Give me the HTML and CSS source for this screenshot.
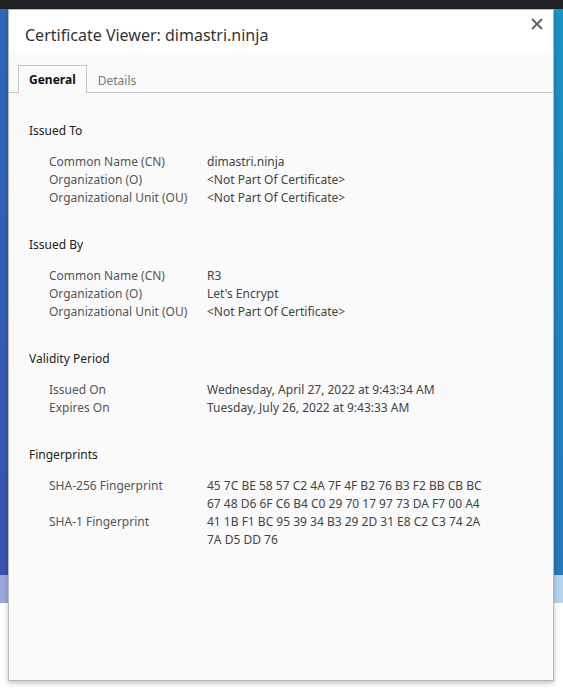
FILE: index.html
```html
<!DOCTYPE html>
<html>
<head>
<meta charset="utf-8">
<link rel="stylesheet" href="styles.css">
</head>
<body>
<div class="topbar"></div>
<div class="backdrop">
  <div class="blue"></div>
  <div class="band"></div>
</div>
<div class="dialog">
  <div class="titlebar">
    <h1 class="title">Certificate Viewer: dimastri.ninja</h1>
    <span class="close">
      <svg width="12" height="12" viewBox="0 0 12 12"><path d="M1 1L11 11M11 1L1 11" stroke="#5f6368" stroke-width="2" fill="none"/></svg>
    </span>
  </div>
  <div class="tabs">
    <div class="tab active">General</div>
    <div class="tab">Details</div>
  </div>
  <div class="content">
    <section class="section">
      <h2 class="heading">Issued To</h2>
      <div class="rows">
        <div class="label">Common Name (CN)</div><div class="value">dimastri.ninja</div>
        <div class="label">Organization (O)</div><div class="value">&lt;Not Part Of Certificate&gt;</div>
        <div class="label">Organizational Unit (OU)</div><div class="value">&lt;Not Part Of Certificate&gt;</div>
      </div>
    </section>
    <section class="section">
      <h2 class="heading">Issued By</h2>
      <div class="rows">
        <div class="label">Common Name (CN)</div><div class="value">R3</div>
        <div class="label">Organization (O)</div><div class="value">Let's Encrypt</div>
        <div class="label">Organizational Unit (OU)</div><div class="value">&lt;Not Part Of Certificate&gt;</div>
      </div>
    </section>
    <section class="section">
      <h2 class="heading">Validity Period</h2>
      <div class="rows">
        <div class="label">Issued On</div><div class="value">Wednesday, April 27, 2022 at 9:43:34 AM</div>
        <div class="label">Expires On</div><div class="value">Tuesday, July 26, 2022 at 9:43:33 AM</div>
      </div>
    </section>
    <section class="section">
      <h2 class="heading">Fingerprints</h2>
      <div class="rows">
        <div class="label">SHA-256 Fingerprint</div><div class="value fp">45 7C BE 58 57 C2 4A 7F 4F B2 76 B3 F2 BB CB BC 67 48 D6 6F C6 B4 C0 29 70 17 97 73 DA F7 00 A4</div>
        <div class="label">SHA-1 Fingerprint</div><div class="value fp">41 1B F1 BC 95 39 34 B3 29 2D 31 E8 C2 C3 74 2A 7A D5 DD 76</div>
      </div>
    </section>
  </div>
</div>
</body>
</html>
```
FILE: styles.css
```css
* { box-sizing: border-box; }
html, body {
  margin: 0;
  padding: 0;
  width: 563px;
  height: 692px;
  overflow: hidden;
  background: #ffffff;
  font-family: "Noto Sans", "Open Sans", sans-serif;
}
.topbar {
  height: 9px;
  background: #202124;
}
.backdrop {
  position: relative;
  height: 600px;
}
.blue {
  height: 566px;
  background:
    linear-gradient(180deg, #2a6ab8 0%, #3a52b0 100%) left top / 20px 100% no-repeat,
    linear-gradient(180deg, #1a92c4 0%, #2478bb 100%) right top / 20px 100% no-repeat,
    #2a70b8;
}
.band {
  height: 28px;
  background: linear-gradient(90deg, #98a6dc 0%, #b6d5ec 100%);
}
.dialog {
  position: absolute;
  left: 8px;
  top: 9px;
  width: 546px;
  height: 672px;
  border: 1px solid #b8b8b8;
  background: #fafafa;
  box-shadow: 0 2px 5px rgba(0,0,0,0.25);
  display: flex;
  flex-direction: column;
}
.titlebar {
  height: 42px;
  background: #ffffff;
  display: flex;
  align-items: center;
  justify-content: space-between;
  padding: 0 10px 0 16px;
}
.title {
  margin: 7px 0 0 0;
  font-size: 16px;
  font-weight: 400;
  color: #333333;
}
.close {
  align-self: flex-start;
  margin-top: 8px;
  display: flex;
}
.tabs {
  display: flex;
  align-items: flex-end;
  height: 41px;
  padding-left: 9px;
  border-bottom: 1px solid #c4c4c4;
}
.tab {
  height: 27px;
  padding: 0 10px;
  font-size: 12px;
  line-height: 27px;
  color: #777777;
  margin-bottom: -1px;
  border: 1px solid transparent;
  border-bottom: none;
}
.tab.active {
  font-weight: 700;
  color: #111111;
  border-color: #c4c4c4;
  background: #fafafa;
  height: 28px;
}
.content {
  padding: 0 0 0 20px;
}
.section {
  padding-top: 29px;
}
.heading {
  margin: 0 0 13px 0;
  font-size: 12px;
  font-weight: 400;
  line-height: 18px;
  color: #222222;
}
.rows {
  display: grid;
  grid-template-columns: 158px 282px;
  padding-left: 20px;
  font-size: 12px;
  line-height: 18px;
}
.label {
  color: #555555;
}
.value {
  color: #444444;
}
```
